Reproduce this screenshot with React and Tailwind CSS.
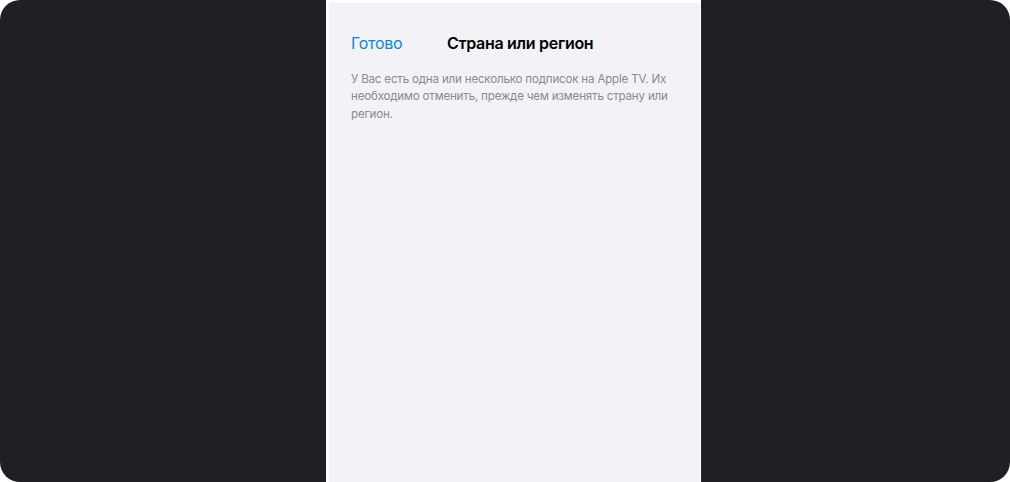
import React from 'react'

const App = () => {
    return (
        <div className="w-[1010px] h-[482px] bg-white">
            <div className="w-full h-full bg-[#1f2024] rounded-[20px] overflow-hidden flex pl-[326px]">
                {/* phone sheet */}
                <div className="w-[375px] h-full bg-[#f2f2f7] border-l-[3px] border-t-[3px] border-r border-white" style={{ fontFamily: 'Inter, "Noto Sans", sans-serif' }}>
                    <div className="relative flex items-center h-[30px] mt-[25px] px-[22px]">
                        <span className="text-[16px] tracking-[-0.3px] text-[#0c86d6]">Готово</span>
                        <span className="absolute left-[118px] text-[16px] font-semibold tracking-[-0.3px] text-black">Страна или регион</span>
                    </div>
                    <div className="mt-[13px] px-[22px] text-[11.6px] leading-[17.3px] tracking-[-0.2px] text-[#8b8b90] whitespace-nowrap">
                        <div>У Вас есть одна или несколько подписок на Apple TV. Их</div>
                        <div>необходимо отменить, прежде чем изменять страну или</div>
                        <div>регион.</div>
                    </div>
                </div>
            </div>
        </div>
    )
}

export default App
